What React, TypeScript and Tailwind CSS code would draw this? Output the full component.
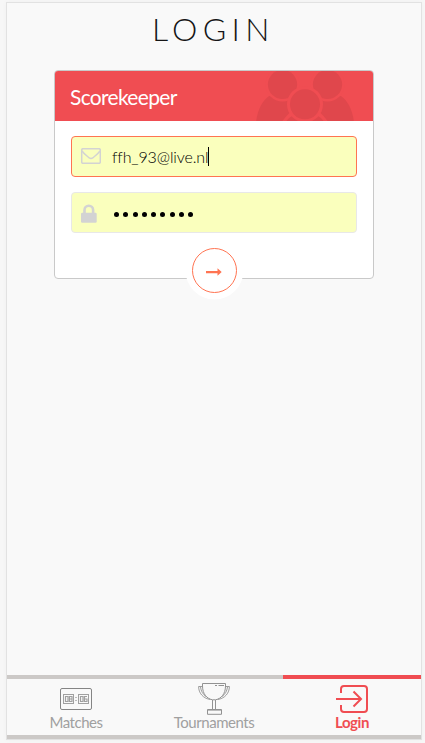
import React from "react";

const RED = "#f04d52";

function UsersArt() {
  return (
    <svg className="absolute left-[201px] top-0" width="100" height="50" viewBox="256 71 100 50" aria-hidden="true">
      <g fill="#e0474c">
        <path d="M256 123C257 111 262 101 269 96L305 96L341 96C348 101 353 111 354 123Z" />
        <circle cx="282.5" cy="84.5" r="17" fill={RED} />
        <circle cx="327.5" cy="84.5" r="17" fill={RED} />
        <path d="M291 90H319V108H291Z" fill={RED} />
        <circle cx="282.5" cy="84.5" r="14.6" />
        <circle cx="327.5" cy="84.5" r="14.6" />
        <circle cx="305" cy="104.3" r="18" fill={RED} />
        <path d="M281 123Q285 117 290.5 112L293.5 115Q288 118 285 123ZM329 123Q325 117 319.5 112L316.5 115Q322 118 325 123Z" fill={RED} />
        <circle cx="305" cy="104.3" r="15" />
      </g>
    </svg>
  );
}

function Envelope() {
  return (
    <svg className="relative -top-px" width="20" height="16" viewBox="0 0 20 16" fill="none" stroke="#d3d3d3" strokeWidth="1.5" aria-hidden="true">
      <rect x=".7" y=".7" width="18.6" height="14.6" rx="1.3" />
      <path d="M1 3C3 6 6 8 8.3 9.9Q10 11.2 11.7 9.9C14 8 17 6 19 3" />
    </svg>
  );
}

function Lock() {
  return (
    <svg className="relative top-px" width="16" height="19" viewBox="0 0 16 19" aria-hidden="true">
      <path d="M3.5 10V6A4.3 4.3 0 0 1 12.1 6V10" fill="none" stroke="#d3d3d3" strokeWidth="2.6" />
      <rect y="8.7" width="15.7" height="10.1" rx="1.2" fill="#d3d3d3" />
    </svg>
  );
}

function Scoreboard() {
  return (
    <svg width="32" height="22" viewBox="0 0 32 22" fill="none" stroke="#858585" aria-hidden="true">
      <rect x=".5" y=".5" width="31" height="21" rx="1.5" />
      <g stroke="#a0a0a0">
        <rect x="3.5" y="6.5" width="10" height="9" />
        <rect x="18.5" y="6.5" width="10" height="9" />
        <path d="M5.5 8.5H8V13.5H5.5ZM9.5 8.5H12V13.5H9.5ZM9.5 11H12M20.5 8.5H23V13.5H20.5ZM27 8.5H24.5V13.5H27V11H24.5" strokeWidth="1.2" />
        <path d="M15 9.5H17M15 12.5H17" stroke="#bcbcbc" />
      </g>
    </svg>
  );
}

function Trophy() {
  return (
    <svg width="32" height="32" viewBox="0 0 32 32" fill="none" stroke="#929292" aria-hidden="true">
      <path d="M4.5 .5H27.5V3C27.5 11 23 15.8 17.5 16.8H14.5C9 15.8 4.5 11 4.5 3Z" />
      <path d="M4.5 3.5H.6C.6 10 5 15.5 12.5 16.5M27.5 3.5H31.4C31.4 10 27 15.5 19.5 16.5M2.5 4C3 8 5 11.5 8 13.5M29.5 4C29 8 27 11.5 24 13.5" strokeWidth=".9" />
      <path d="M17 2.5H19M20.5 2.5H26" />
      <path d="M14.5 17V26.5M17.5 17V26.5M9.5 26.5H23.5V31.3H9.5Z" />
      <path d="M10 27.5H23" stroke="#bdbdbd" />
    </svg>
  );
}

function LoginIcon() {
  return (
    <svg width="32" height="28" viewBox="0 0 32 28" fill="none" stroke={RED} strokeWidth="2" aria-hidden="true">
      <path d="M5 8V4Q5 1 8 1H28Q31 1 31 4V24Q31 27 28 27H8Q5 27 5 24V20" />
      <path d="M0 14H25M17.5 6.5L25 14L17.5 21.5" />
    </svg>
  );
}

export default function App() {
  return (
    <div className="h-[743px] w-[425px] overflow-hidden bg-[#f7f7f7] pl-1.5 pt-0.5 font-['Lato',sans-serif]">
      <main className="flex h-[738px] w-[416px] flex-col border border-[#e2e2e2] bg-[#f9f9f9] shadow-[0_0_5px_#00000008]">
        <h1 className="h-[67px] pl-[145px] pt-[6px] text-[32px] font-light leading-[40px] tracking-[5.3px] text-[#151515]">LOGIN</h1>
        <section className="ml-[47px] h-[209px] w-[320px] rounded-[4px] border border-[#c9c9c9] bg-white">
          <header className="relative h-[50px] overflow-hidden rounded-t-[3px] bg-[#f04d52] pl-[15px] text-[21px] leading-[51px] tracking-[-0.68px] text-white">
            <UsersArt />
            <span className="relative">Scorekeeper</span>
          </header>
          <form className="flex flex-col items-center pt-[15px]">
            <div className="flex h-[41px] w-[286px] items-center rounded-[4px] border border-[#ff7452] bg-[#faffbd] pl-[9px] text-[16px] font-light tracking-[-0.12px] text-black">
              <Envelope />
              <span className="ml-[11px] w-[96px] whitespace-nowrap">ffh_93@live.nl</span>
              <span className="h-[19px] w-px bg-black" />
            </div>
            <div className="mt-[15px] flex h-[41px] w-[286px] items-center rounded-[4px] border border-[#e8e8e8] bg-[#faffbd] pl-[9px]">
              <Lock />
              <div className="ml-[17px] mt-1 flex gap-[4.3px]">
                {Array.from({ length: 9 }, (_, i) => <i key={i} className="size-[5px] rounded-full bg-black" />)}
              </div>
            </div>
            <div className="mt-[9px] flex size-[57px] shrink-0 items-center justify-center rounded-full bg-white shadow-[0_0_0_0.5px_white]">
              <button type="button" aria-label="Log in" className="flex size-[45px] items-center justify-center rounded-full border border-[#ff7452]">
                <svg className="relative top-px" width="16" height="8" viewBox="0 0 16 8" fill="#ff7452">
                  <path d="M0 3H11.5V.3L15.7 4L11.5 7.7V5.2H0Z" />
                </svg>
              </button>
            </div>
          </form>
        </section>
        <nav className="mt-auto grid h-[64px] grid-cols-3 border-b-4 border-[#ccc9c7] text-[15px] leading-[18px] tracking-[-0.45px] text-[#a0a0a0]">
          <div className="flex flex-col items-center border-t-4 border-[#ccc9c7] pt-[9px]">
            <Scoreboard />
            <span className="mt-[3px]">Matches</span>
          </div>
          <div className="flex flex-col items-center border-t-4 border-[#ccc9c7] pt-1">
            <Trophy />
            <span className="-mt-0.5">Tournaments</span>
          </div>
          <div className="flex flex-col items-center border-t-4 border-[#f04d52] pt-1.5 font-bold text-[#f04d52]">
            <LoginIcon />
            <span>Login</span>
          </div>
        </nav>
      </main>
    </div>
  );
}
